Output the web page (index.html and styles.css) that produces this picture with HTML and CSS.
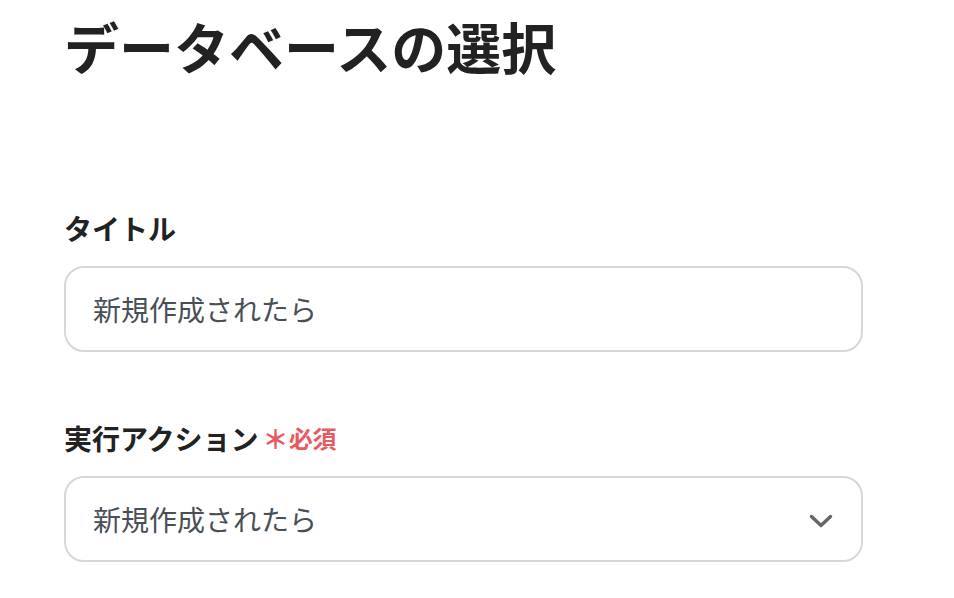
FILE: index.html
```html
<!DOCTYPE html>
<html lang="ja">
<head>
<meta charset="utf-8">
<link rel="stylesheet" href="styles.css">
</head>
<body>
<main class="page">
  <h1 class="title">データベースの選択</h1>
  <section class="field field-first">
    <div class="label">タイトル</div>
    <div class="box">新規作成されたら</div>
  </section>
  <section class="field">
    <div class="label">実行アクション<span class="req"><span class="ast">＊</span>必須</span></div>
    <div class="box select">
      <span>新規作成されたら</span>
      <svg class="chev" width="24" height="14" viewBox="0 0 24 14"><path d="M2.5 2.5 L12 11.5 L21.5 2.5" fill="none" stroke="#666" stroke-width="3.4" stroke-linecap="round" stroke-linejoin="round"/></svg>
    </div>
  </section>
</main>
</body>
</html>
```
FILE: styles.css
```css
html, body { margin: 0; padding: 0; background: #fff; }
body { font-family: "Noto Sans CJK JP", "Noto Sans", sans-serif; color: #222; }
.page { padding: 18px 0 0 64px; width: 799px; }
.title { margin: 0; font-size: 55px; line-height: 55px; font-weight: 700; color: #222; letter-spacing: 0; }
.field-first { margin-top: 141px; }
.field { display: flex; flex-direction: column; }
.field + .field { margin-top: 72px; }
.label { font-size: 28px; line-height: 28px; font-weight: 700; color: #222; height: 28px; margin-bottom: 24px; display: flex; align-items: center; }
.req { color: #e85a62; font-size: 24px; font-weight: 700; margin-left: 4px; display: inline-flex; align-items: center; }
.ast { font-size: 26px; margin-right: 0; }
.box { box-sizing: border-box; height: 86px; border: 2px solid #d3d8dd; border-radius: 20px; padding: 0 27px; display: flex; align-items: center; font-size: 28px; color: #4a4f56; }
.select { justify-content: space-between; padding-right: 28px; }
.chev { display: block; margin-top: 3px; }
```
